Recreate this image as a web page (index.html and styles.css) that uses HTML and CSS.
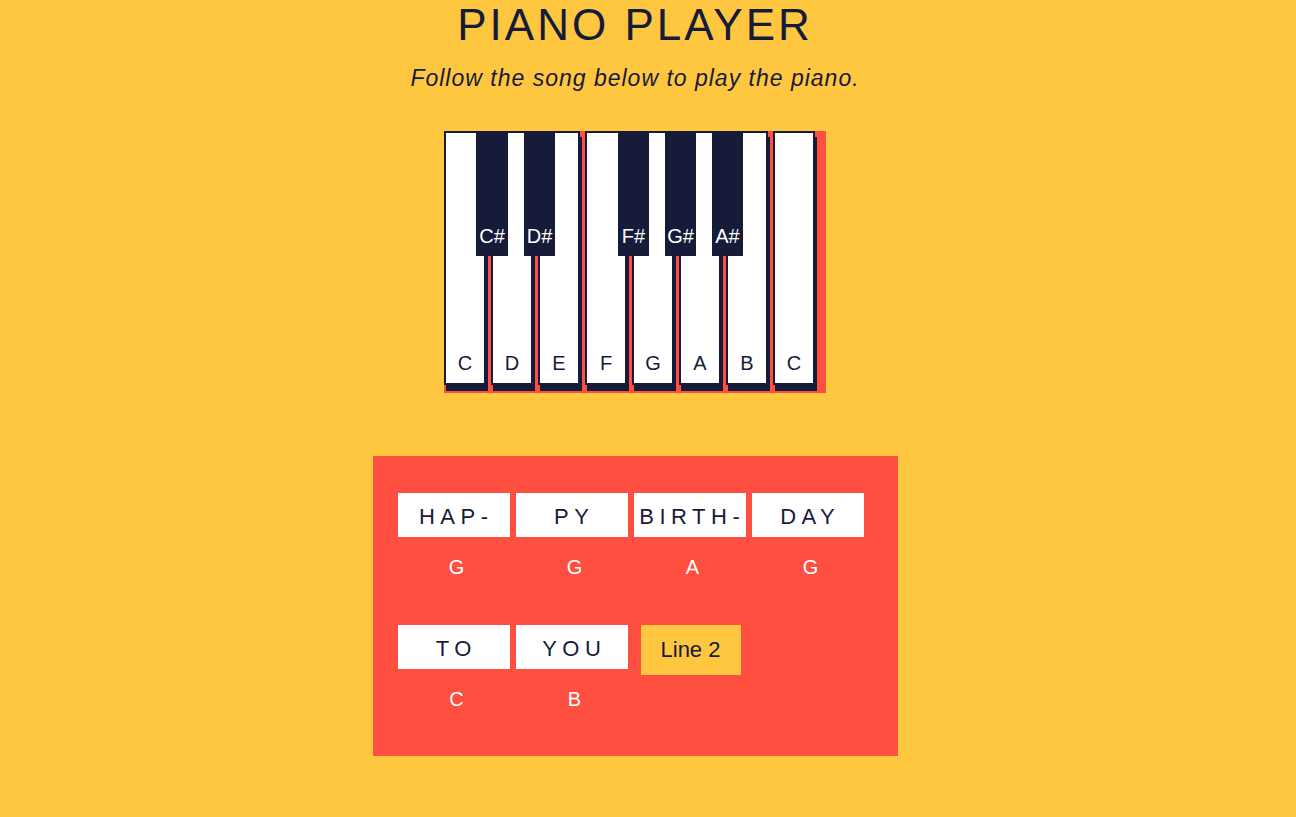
FILE: index.html
```html
<!DOCTYPE html>
<html lang="en">
<head>
    <meta charset="UTF-8">
    <meta name="viewport" content="width=device-width, initial-scale=1.0">
    <title>Piano Player</title>
    <link rel="stylesheet" href="styles.css">
</head>
<body>
    <div class="page">
        <h1>PIANO PLAYER</h1>
        <p class="intro">Follow the song below to play the piano.</p>

        <!-- Keyboard -->
        <section class="keyboard">
            <div class="key"><span>C</span></div>
            <div class="key"><span>D</span></div>
            <div class="key"><span>E</span></div>
            <div class="key"><span>F</span></div>
            <div class="key"><span>G</span></div>
            <div class="key"><span>A</span></div>
            <div class="key"><span>B</span></div>
            <div class="key"><span>C</span></div>

            <div class="black-key cs"><span>C#</span></div>
            <div class="black-key ds"><span>D#</span></div>
            <div class="black-key fs"><span>F#</span></div>
            <div class="black-key gs"><span>G#</span></div>
            <div class="black-key as"><span>A#</span></div>
        </section>

        <!-- Song -->
        <section class="song">
            <div class="line">
                <div class="note">
                    <div class="word">HAP-</div>
                    <div class="tone">G</div>
                </div>
                <div class="note">
                    <div class="word">PY</div>
                    <div class="tone">G</div>
                </div>
                <div class="note">
                    <div class="word">BIRTH-</div>
                    <div class="tone">A</div>
                </div>
                <div class="note">
                    <div class="word">DAY</div>
                    <div class="tone">G</div>
                </div>
            </div>
            <div class="line">
                <div class="note">
                    <div class="word">TO</div>
                    <div class="tone">C</div>
                </div>
                <div class="note">
                    <div class="word">YOU</div>
                    <div class="tone">B</div>
                </div>
                <button class="next-line">Line 2</button>
            </div>
        </section>
    </div>
</body>
</html>
```

FILE: styles.css
```css
body {
    margin: 0;
    padding: 0;
    background: #ffc640;
    color: #161b39;
    font-family: "Liberation Sans", Arial, sans-serif;
}
.page {
    width: 1270px;
    display: flex;
    flex-direction: column;
    align-items: center;
}
h1 {
    margin: 0;
    font-size: 44px;
    line-height: 49px;
    font-weight: normal;
    letter-spacing: 3px;
}
.intro {
    margin: 16px 0 0;
    font-size: 23px;
    font-style: italic;
    letter-spacing: 1px;
}
.keyboard {
    position: relative;
    display: flex;
    width: 382px;
    height: 262px;
    margin-top: 39px;
    background: #ff4f40;
}
.key {
    box-sizing: border-box;
    width: 42px;
    height: 254px;
    margin-right: 5px;
    padding-bottom: 8px;
    display: flex;
    flex-direction: column;
    justify-content: flex-end;
    align-items: center;
    background: white;
    border: 2px solid #161b39;
    box-shadow: 2px 6px 0 #161b39;
    font-size: 20px;
    line-height: 24px;
}
.black-key {
    position: absolute;
    top: 0;
    box-sizing: border-box;
    width: 31px;
    height: 125px;
    padding-bottom: 8px;
    display: flex;
    flex-direction: column;
    justify-content: flex-end;
    align-items: center;
    background: #161b39;
    color: white;
    font-size: 20px;
    line-height: 24px;
}
.cs { left: 32px; width: 32px; }
.ds { left: 80px; }
.fs { left: 174px; }
.gs { left: 221px; }
.as { left: 268px; }
.song {
    box-sizing: border-box;
    width: 525px;
    height: 300px;
    margin-top: 63px;
    padding: 37px 0 0 25px;
    background: #ff4f40;
}
.line {
    display: flex;
    align-items: flex-start;
    margin-bottom: 46px;
}
.note {
    width: 118px;
}
.word {
    box-sizing: border-box;
    width: 112px;
    height: 44px;
    padding-top: 4px;
    background: white;
    font-size: 22px;
    line-height: 40px;
    letter-spacing: 5.5px;
    text-indent: 5.5px;
    text-align: center;
}
.tone {
    margin-top: 18px;
    color: white;
    font-size: 20px;
    line-height: 24px;
    text-align: center;
}
.next-line {
    width: 100px;
    height: 50px;
    margin-left: 7px;
    padding: 0;
    border: none;
    background: #ffc640;
    color: #161b39;
    font-family: "Liberation Sans", Arial, sans-serif;
    font-size: 22px;
    cursor: pointer;
}
```
